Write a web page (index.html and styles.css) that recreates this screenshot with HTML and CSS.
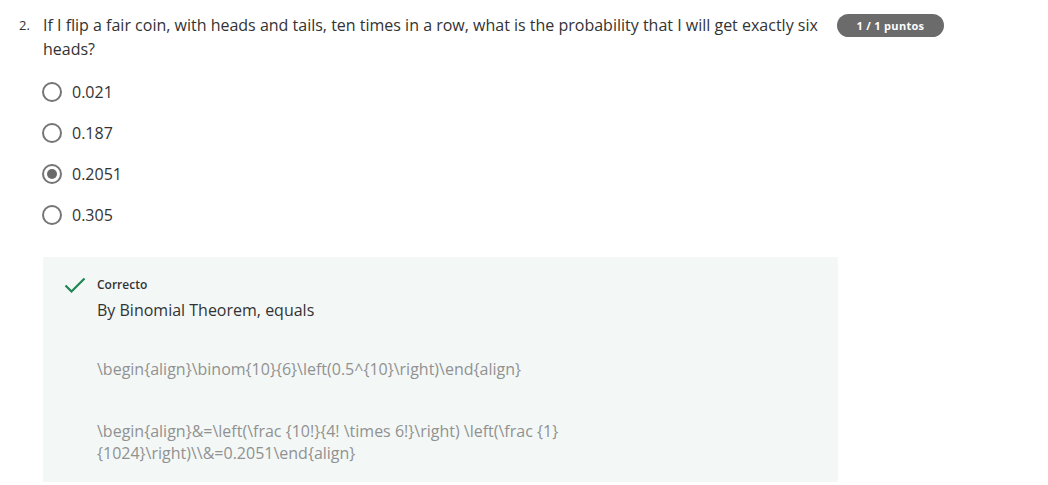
FILE: index.html
```html
<!DOCTYPE html>
<html>
<head>
<meta charset="utf-8">
<link rel="stylesheet" href="styles.css">
</head>
<body>
<div class="question">
  <div class="q-head">
    <div class="q-num">2.</div>
    <div class="q-text">If I flip a fair coin, with heads and tails, ten times in a row, what is the probability that I will get exactly six heads?</div>
    <div class="badge">1 / 1 puntos</div>
  </div>
  <div class="options">
    <div class="option"><span class="radio"></span><span class="opt-label">0.021</span></div>
    <div class="option"><span class="radio"></span><span class="opt-label">0.187</span></div>
    <div class="option"><span class="radio checked"></span><span class="opt-label">0.2051</span></div>
    <div class="option"><span class="radio"></span><span class="opt-label">0.305</span></div>
  </div>
  <div class="feedback">
    <div class="fb-icon">
      <svg width="22" height="18" viewBox="0 0 22 18"><path d="M1.5 9.5 L7.5 15.5 L20.5 2.5" fill="none" stroke="#1f8354" stroke-width="2.2"/></svg>
    </div>
    <div class="fb-body">
      <div class="fb-title">Correcto</div>
      <div class="fb-text">By Binomial Theorem, equals</div>
      <p class="latex">\begin{align}\binom{10}{6}\left(0.5^{10}\right)\end{align}</p>
      <p class="latex">\begin{align}&amp;=\left(\frac {10!}{4! \times 6!}\right) \left(\frac {1}{1024}\right)\\&amp;=0.2051\end{align}</p>
    </div>
  </div>
</div>
</body>
</html>
```

FILE: styles.css
```css
html, body {
  margin: 0;
  padding: 0;
  background: #ffffff;
}
body {
  font-family: "Open Sans", "Liberation Sans", sans-serif;
  color: #333333;
}
.question {
  width: 1048px;
  padding-top: 13px;
}
.q-head {
  display: flex;
  align-items: flex-start;
}
.q-num {
  width: 24px;
  padding-left: 19px;
  font-size: 13px;
  line-height: 24px;
  color: #333;
}
.q-text {
  width: 786px;
  font-size: 16px;
  line-height: 24px;
  color: #333;
}
.badge {
  margin-left: 8px;
  margin-top: 1px;
  width: 107px;
  height: 23px;
  border-radius: 12px;
  background: #6b6b6b;
  color: #ffffff;
  font-size: 11px;
  font-weight: 700;
  line-height: 23px;
  text-align: center;
  letter-spacing: 0.3px;
}
.options {
  padding-left: 42px;
  padding-top: 20px;
  display: flex;
  flex-direction: column;
  gap: 19px;
}
.option {
  display: flex;
  align-items: center;
  height: 22px;
}
.radio {
  box-sizing: border-box;
  width: 20px;
  height: 20px;
  border: 2px solid #757575;
  border-radius: 50%;
  display: inline-flex;
  align-items: center;
  justify-content: center;
}
.radio.checked::after {
  content: "";
  width: 10px;
  height: 10px;
  border-radius: 50%;
  background: #6b6b6b;
}
.opt-label {
  margin-left: 10px;
  font-size: 16px;
  color: #333;
}
.feedback {
  margin-left: 43px;
  margin-top: 31px;
  width: 795px;
  height: 225px;
  box-sizing: border-box;
  background: #f3f8f7;
  display: flex;
  padding-top: 18px;
  padding-left: 21px;
}
.fb-icon {
  width: 33px;
  padding-top: 1px;
}
.fb-title {
  font-size: 12px;
  font-weight: 600;
  line-height: 20px;
  color: #333;
}
.fb-text {
  font-size: 16px;
  line-height: 24px;
  margin-top: 3px;
  color: #333;
}
.latex {
  margin: 36px 0 0 0;
  font-size: 16px;
  line-height: 22px;
  color: #919191;
  width: 560px;
}
.latex + .latex {
  margin-top: 40px;
}
```
